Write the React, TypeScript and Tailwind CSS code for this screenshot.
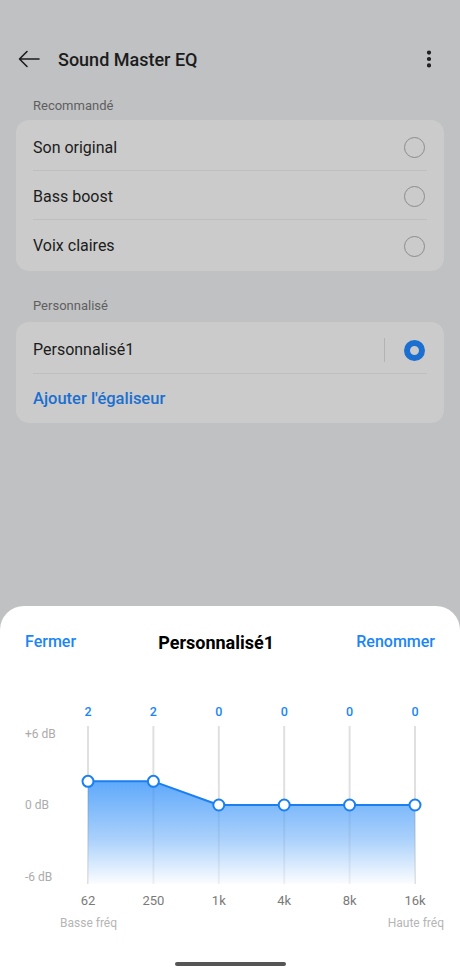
import { MoreVertical } from "lucide-react";

const bands = [
  { f: "62", v: 2 },
  { f: "250", v: 2 },
  { f: "1k", v: 0 },
  { f: "4k", v: 0 },
  { f: "8k", v: 0 },
  { f: "16k", v: 0 },
];

const COLS = [88, 153.4, 218.8, 284.2, 349.6, 415];
// svg y for 0 dB; 6 dB = 71px
const ZERO = 79;
const yOf = (v: number) => ZERO - (v * 71) / 6;

function Radio({ on }: { on?: boolean }) {
  if (on) {
    return (
      <span className="size-[21px] rounded-full border-[6px] border-[#1a6fd0] bg-[#cbcbcb]" />
    );
  }
  return <span className="size-[21px] rounded-full border border-[#8c8c8c]" />;
}

function EqChart() {
  const pts = bands.map((b, i) => [COLS[i], yOf(b.v)] as const);
  const line = pts.map(([x, y]) => `${x},${y}`).join(" ");
  const area = `${line} ${COLS[5]},158 ${COLS[0]},158`;
  return (
    <svg width="460" height="160" viewBox="0 0 460 160" className="block">
      <defs>
        <linearGradient id="eqfill" x1="0" y1="54" x2="0" y2="160" gradientUnits="userSpaceOnUse">
          <stop offset="0" stopColor="#5da8fb" />
          <stop offset="0.55" stopColor="#a9d0fb" />
          <stop offset="1" stopColor="#ffffff" />
        </linearGradient>
      </defs>
      <text x="25" y="12" fontSize="12" fill="#ababab" fontFamily="Roboto, sans-serif">+6 dB</text>
      <text x="25" y="83" fontSize="12" fill="#ababab" fontFamily="Roboto, sans-serif">0 dB</text>
      <text x="25" y="155" fontSize="12" fill="#ababab" fontFamily="Roboto, sans-serif">-6 dB</text>
      {COLS.map((x) => (
        <line key={x} x1={x} y1="0" x2={x} y2="158" stroke="#ececec" strokeWidth="2" />
      ))}
      <polygon points={area} fill="url(#eqfill)" />
      {COLS.map((x) => (
        <line key={`o${x}`} x1={x} y1="0" x2={x} y2="158" stroke="rgba(0,0,0,0.05)" strokeWidth="2" />
      ))}
      <polyline points={line} fill="none" stroke="#1a7ff0" strokeWidth="2" strokeLinejoin="round" />
      {pts.map(([x, y]) => (
        <circle key={x} cx={x} cy={y} r="5.5" fill="#fff" stroke="#1a7ff0" strokeWidth="2" />
      ))}
    </svg>
  );
}

export default function App() {
  return (
    <div className="h-[977px] w-[460px] bg-[#c0c1c3] flex flex-col overflow-hidden font-['Roboto',sans-serif]">
      <header className="mt-[34px] h-[50px] flex items-center pl-[17px] pr-[20px]">
        <svg width="24" height="24" viewBox="0 0 24 24" fill="none" stroke="#1c1c1c" strokeWidth="1.6" strokeLinecap="round" strokeLinejoin="round">
          <path d="M22 12H2.5M10 4.5 2.5 12l7.5 7.5" />
        </svg>
        <h1 className="ml-[17px] text-[18px] font-medium text-[#1c1c1c]">Sound Master EQ</h1>
        <MoreVertical className="ml-auto size-[22px] text-[#1c1c1c]" strokeWidth={2.6} />
      </header>

      <p className="mt-[13px] px-[33px] text-[13px] leading-[18px] text-[#5f5f5f]">Recommandé</p>
      <section className="mt-[5px] mx-[16px] rounded-[13px] bg-[#cbcbcb] py-[2px]">
        {["Son original", "Bass boost", "Voix claires"].map((t, i) => (
          <div key={t} className={`h-[49px] mx-[17px] pt-[3px] flex items-center justify-between ${i < 2 ? "border-b border-[#bfbfbf]" : ""}`}>
            <span className="text-[16px] text-[#1c1c1c]">{t}</span>
            <span className="mr-[2px] flex"><Radio /></span>
          </div>
        ))}
      </section>

      <p className="mt-[26px] px-[33px] text-[13px] leading-[18px] text-[#5f5f5f]">Personnalisé</p>
      <section className="mt-[7px] mx-[16px] rounded-[13px] bg-[#cbcbcb] pt-[2px]">
        <div className="h-[50px] mx-[17px] pt-[3px] flex items-center border-b border-[#bfbfbf]">
          <span className="text-[16px] text-[#1c1c1c]">Personnalisé1</span>
          <span className="ml-auto h-[24px] w-px bg-[#b3b3b3]" />
          <span className="ml-[19px] mr-[2px] flex"><Radio on /></span>
        </div>
        <div className="h-[49px] mx-[17px] pt-[2px] flex items-center">
          <span className="text-[16.5px] font-medium text-[#1a6fd0]">Ajouter l'égaliseur</span>
        </div>
      </section>

      <div className="mt-auto h-[371px] bg-white rounded-t-[24px] flex flex-col">
        <div className="mt-[24px] h-[24px] px-[25px] flex items-center justify-between">
          <span className="text-[16px] font-medium text-[#1a86f5]">Fermer</span>
          <span className="text-[18px] font-bold text-black">Personnalisé1</span>
          <span className="text-[16px] font-medium text-[#1a86f5]">Renommer</span>
        </div>

        <div className="mt-[50px] pl-[55.3px] w-[447.7px] grid grid-cols-6">
          {bands.map((b) => (
            <span key={b.f} className="text-center text-[12.5px] leading-[16px] font-medium text-[#1a86f5]">{b.v}</span>
          ))}
        </div>
        <div className="mt-[6px]">
          <EqChart />
        </div>
        <div className="mt-[6px] pl-[55.3px] w-[447.7px] grid grid-cols-6">
          {bands.map((b) => (
            <span key={b.f} className="text-center text-[13px] leading-[18px] text-[#7a7a7a]">{b.f}</span>
          ))}
        </div>
        <div className="mt-[4px] pl-[60px] pr-[16px] flex justify-between text-[12px] leading-[18px] text-[#b5b5b5]">
          <span>Basse fréq</span>
          <span>Haute fréq</span>
        </div>

        <div className="mt-auto mb-[11px] mx-auto h-[4px] w-[111px] rounded-full bg-[#555555]" />
      </div>
    </div>
  );
}
